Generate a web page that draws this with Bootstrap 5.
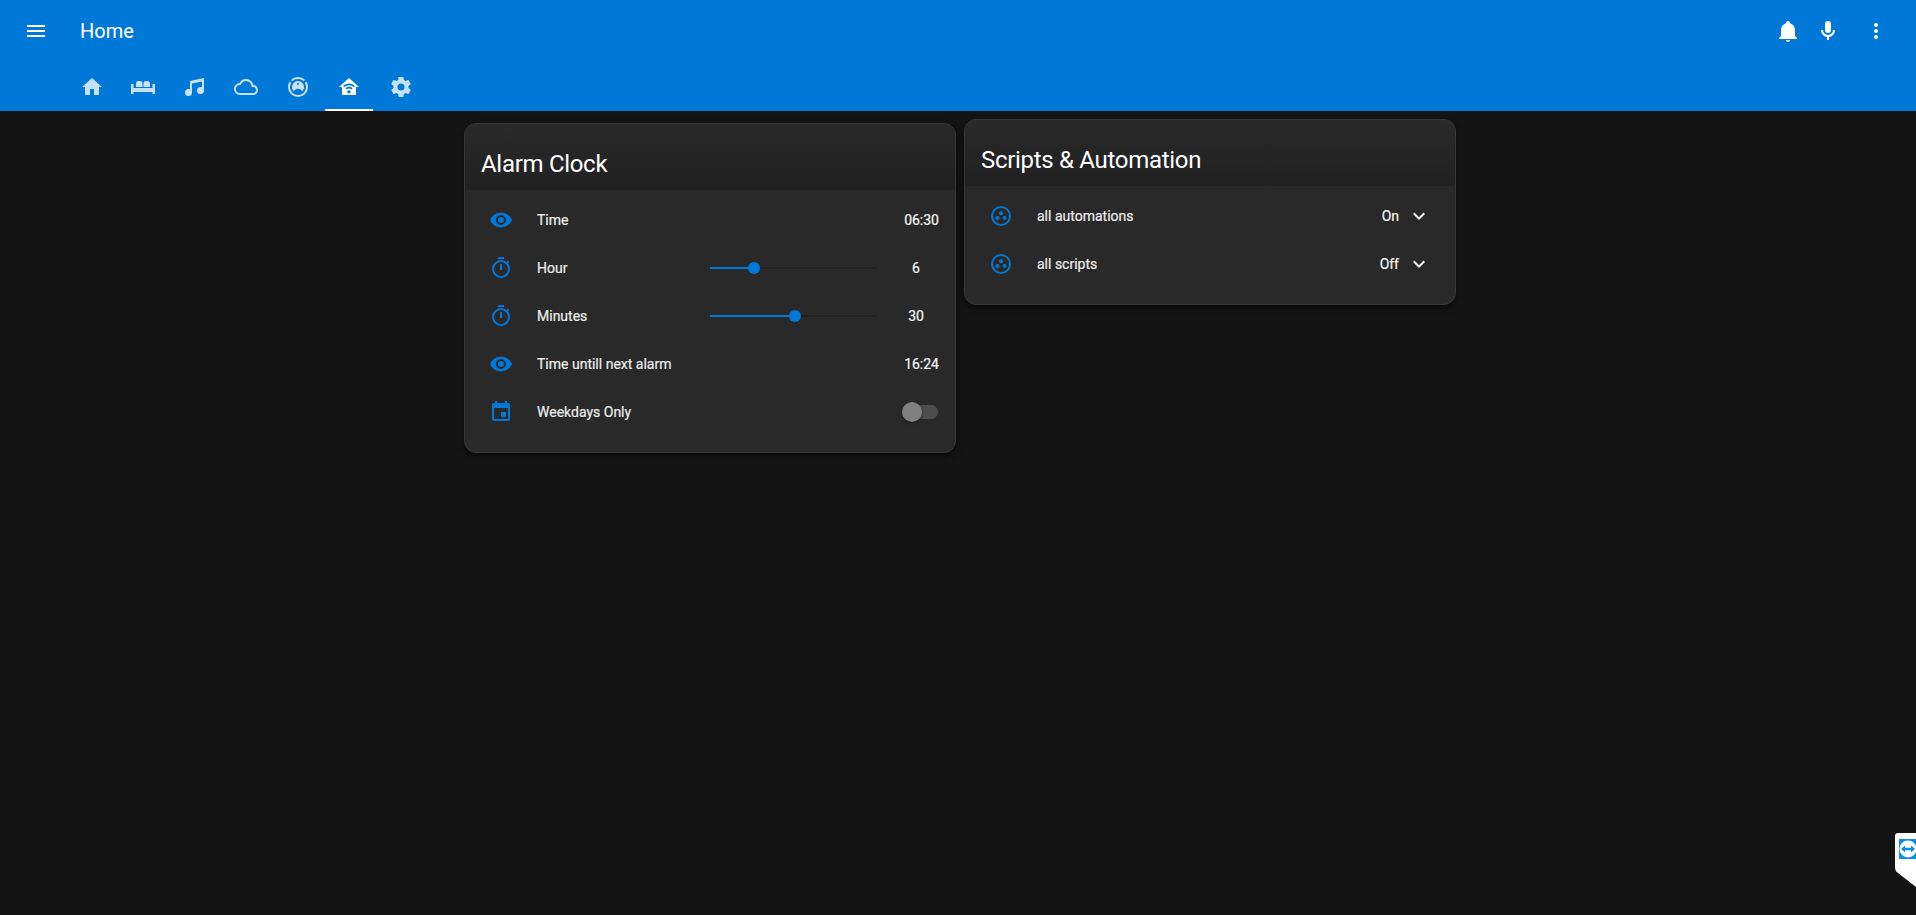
<!DOCTYPE html>
<html lang="en">
<head>
  <meta charset="UTF-8">
  <meta name="viewport" content="width=device-width, initial-scale=1">
  <title>Home</title>
  <link href="https://cdn.jsdelivr.net/npm/bootstrap@5.3.0/dist/css/bootstrap.min.css" rel="stylesheet">
  <style>
    html, body { height: 100%; }
    body {
      background-color: #141414;
      color: #e1e1e1;
      font-family: Roboto, "Liberation Sans", sans-serif;
      font-size: 14px;
      overflow: hidden;
    }
    svg { fill: currentColor; display: block; }
    /* header */
    .app-header { background-color: #0078d7; color: #fff; height: 111px; }
    .top-row { height: 62px; padding-left: 24px; padding-right: 16px; }
    .app-title { font-size: 20px; margin-left: 32px; line-height: 1; }
    .head-btn { width: 40px; height: 40px; }
    .head-btn.dots { width: 48px; margin-left: 4px; }
    .tab-row { height: 49px; padding-left: 68px; gap: 3.45px; }
    .tab-item { width: 48px; height: 49px; color: rgba(255,255,255,.78); border-bottom: 2px solid transparent; padding-top: 3px; }
    .tab-item.current { color: #fff; border-bottom-color: #fff; }
    /* cards */
    .board { padding-left: 4px; gap: 8px; }
    .ha-card {
      width: 492px;
      background-color: #292929;
      border: 1px solid #383838;
      border-radius: 12px;
      box-shadow: 0 3px 6px rgba(0,0,0,.6);
      color: #ededed;
      overflow: hidden;
    }
    .ha-card.first { margin-top: 12px; }
    .ha-card.second { margin-top: 8px; }
    .ha-card .card-header {
      height: 66px;
      padding: 24px 16px 0;
      font-size: 24px;
      line-height: 32px;
      letter-spacing: -.3px;
      color: #fff;
      background: linear-gradient(#292929, #212121);
      border: 0;
      border-radius: 0;
    }
    .ha-card .card-body { padding: 6px 16px 16px; }
    .ent-row { height: 48px; -webkit-text-stroke: .2px; }
    .ent-icon { width: 40px; color: #0078d7; flex-shrink: 0; }
    .ent-name { margin-left: 16px; }
    .ent-val { color: #f5f5f5; }
    .val-center { width: 46px; text-align: center; color: #f5f5f5; }
    .slide-track { width: 168px; height: 2px; background-color: #1f1f1f; margin-right: 15px; }
    .slide-fill { height: 2px; background-color: #0078d7; }
    .slide-knob { width: 12px; height: 12px; border-radius: 50%; background-color: #0078d7; margin-left: -6px; flex-shrink: 0; }
    .toggle-wrap { width: 37px; height: 20px; }
    .toggle-track { position: absolute; right: 1px; top: 3px; width: 32px; height: 14px; border-radius: 7px; background-color: #4d4d4d; }
    .toggle-knob { position: absolute; left: 0; top: 0; width: 20px; height: 20px; border-radius: 50%; background-color: #808080; box-shadow: 0 1px 3px rgba(0,0,0,.5); }
    .select-btn { width: 40px; color: #f5f5f5; }
    /* remote support tab in the corner */
    .remote-tab { position: fixed; right: 0; top: 833px; width: 21px; height: 54px; }
  </style>
</head>
<body>

<header class="app-header">
  <div class="top-row d-flex align-items-center">
    <svg width="24" height="24" viewBox="0 0 24 24"><path d="M3,6H21V8H3V6M3,11H21V13H3V11M3,16H21V18H3V16Z"/></svg>
    <div class="app-title flex-grow-1">Home</div>
    <div class="head-btn d-flex align-items-center justify-content-center">
      <svg width="24" height="24" viewBox="0 0 24 24"><path d="M21,19V20H3V19L5,17V11C5,7.9 7.03,5.17 10,4.29C10,4.19 10,4.1 10,4A2,2 0 0,1 12,2A2,2 0 0,1 14,4C14,4.1 14,4.19 14,4.29C16.97,5.17 19,7.9 19,11V17L21,19M14,21A2,2 0 0,1 12,23A2,2 0 0,1 10,21"/></svg>
    </div>
    <div class="head-btn d-flex align-items-center justify-content-center">
      <svg width="24" height="24" viewBox="0 0 24 24"><path d="M12,2A3,3 0 0,1 15,5V11A3,3 0 0,1 12,14A3,3 0 0,1 9,11V5A3,3 0 0,1 12,2M19,11C19,14.53 16.39,17.44 13,17.93V21H11V17.93C7.61,17.44 5,14.53 5,11H7A5,5 0 0,0 12,16A5,5 0 0,0 17,11H19Z"/></svg>
    </div>
    <div class="head-btn dots d-flex align-items-center justify-content-center">
      <svg width="24" height="24" viewBox="0 0 24 24"><path d="M12,16A2,2 0 0,1 14,18A2,2 0 0,1 12,20A2,2 0 0,1 10,18A2,2 0 0,1 12,16M12,10A2,2 0 0,1 14,12A2,2 0 0,1 12,14A2,2 0 0,1 10,12A2,2 0 0,1 12,10M12,4A2,2 0 0,1 14,6A2,2 0 0,1 12,8A2,2 0 0,1 10,6A2,2 0 0,1 12,4Z"/></svg>
    </div>
  </div>
  <nav class="tab-row d-flex">
    <div class="tab-item d-flex align-items-center justify-content-center">
      <svg width="24" height="24" viewBox="0 0 24 24"><path d="M10,20V14H14V20H19V12H22L12,3L2,12H5V20H10Z"/></svg>
    </div>
    <div class="tab-item d-flex align-items-center justify-content-center">
      <svg width="24" height="24" viewBox="0 0 24 24"><path d="M0,9H2.5V13H21.5V9H24V19H21.5V17H2.5V19H0Z"/><path d="M5,12V8.5A2.5,2.5 0 0,1 7.5,6H9A2.5,2.5 0 0,1 11.5,8.5V12Z"/><path d="M12.5,12V8.5A2.5,2.5 0 0,1 15,6H16.5A2.5,2.5 0 0,1 19,8.5V12Z"/></svg>
    </div>
    <div class="tab-item d-flex align-items-center justify-content-center">
      <svg width="24" height="24" viewBox="0 0 24 24"><path d="M21,3V15.5A3.5,3.5 0 0,1 17.5,19A3.5,3.5 0 0,1 14,15.5A3.5,3.5 0 0,1 17.5,12C18.04,12 18.55,12.12 19,12.34V6.47L9,8.6V17.5A3.5,3.5 0 0,1 5.5,21A3.5,3.5 0 0,1 2,17.5A3.5,3.5 0 0,1 5.5,14C6.04,14 6.55,14.12 7,14.34V6L21,3Z"/></svg>
    </div>
    <div class="tab-item d-flex align-items-center justify-content-center">
      <svg width="24" height="24" viewBox="0 0 24 24"><path d="M19,18H6A4,4 0 0,1 2,14A4,4 0 0,1 6,10H6.71C7.37,7.69 9.5,6 12,6A5.5,5.5 0 0,1 17.5,11.5V12H19A3,3 0 0,1 22,15A3,3 0 0,1 19,18M19.35,10.03C18.67,6.59 15.64,4 12,4C9.11,4 6.6,5.64 5.35,8.03C2.34,8.36 0,10.9 0,14A6,6 0 0,0 6,20H19A5,5 0 0,0 24,15C24,12.36 21.95,10.22 19.35,10.03Z"/></svg>
    </div>
    <div class="tab-item d-flex align-items-center justify-content-center">
      <svg width="24" height="24" viewBox="0 0 24 24"><path d="M12,2C14.65,2 17.19,3.06 19.07,4.93L17.65,6.35C16.15,4.85 14.12,4 12,4C9.88,4 7.84,4.84 6.35,6.35L4.93,4.93C6.81,3.06 9.35,2 12,2M3.66,6.5L5.11,7.94C4.39,9.17 4,10.57 4,12A8,8 0 0,0 12,20A8,8 0 0,0 20,12C20,10.57 19.61,9.17 18.88,7.94L20.34,6.5C21.42,8.12 22,10.04 22,12A10,10 0 0,1 12,22A10,10 0 0,1 2,12C2,10.04 2.58,8.12 3.66,6.5M12,6A6,6 0 0,1 18,12C18,13.59 17.37,15.12 16.24,16.24L14.83,14.83C14.08,14.08 13.06,13.66 12,13.66C10.94,13.66 9.92,14.08 9.17,14.83L7.76,16.24C6.63,15.12 6,13.59 6,12A6,6 0 0,1 12,6M12,8A1,1 0 0,0 11,9A1,1 0 0,0 12,10A1,1 0 0,0 13,9A1,1 0 0,0 12,8Z"/></svg>
    </div>
    <div class="tab-item current d-flex align-items-center justify-content-center">
      <svg width="24" height="24" viewBox="0 0 24 24"><path d="M12,3L2,12H5V20H19V12H22L12,3M12,8.5C14.34,8.5 16.46,9.43 18,10.94L16.8,12.12C15.58,10.91 13.88,10.17 12,10.17C10.12,10.17 8.42,10.91 7.2,12.12L6,10.94C7.54,9.43 9.66,8.5 12,8.5M12,11.83C13.4,11.83 14.67,12.39 15.6,13.3L14.4,14.47C13.79,13.87 12.94,13.5 12,13.5C11.06,13.5 10.21,13.87 9.6,14.47L8.4,13.3C9.33,12.39 10.6,11.83 12,11.83M12,15.17C12.94,15.17 13.7,15.91 13.7,16.83C13.7,17.75 12.94,18.5 12,18.5C11.06,18.5 10.3,17.75 10.3,16.83C10.3,15.91 11.06,15.17 12,15.17Z"/></svg>
    </div>
    <div class="tab-item d-flex align-items-center justify-content-center">
      <svg width="24" height="24" viewBox="0 0 24 24"><path d="M12,15.5A3.5,3.5 0 0,1 8.5,12A3.5,3.5 0 0,1 12,8.5A3.5,3.5 0 0,1 15.5,12A3.5,3.5 0 0,1 12,15.5M19.43,12.97C19.47,12.65 19.5,12.33 19.5,12C19.5,11.67 19.47,11.34 19.43,11L21.54,9.37C21.73,9.22 21.78,8.95 21.66,8.73L19.66,5.27C19.54,5.05 19.27,4.96 19.05,5.05L16.56,6.05C16.04,5.66 15.5,5.32 14.87,5.07L14.5,2.42C14.46,2.18 14.25,2 14,2H10C9.75,2 9.54,2.18 9.5,2.42L9.13,5.07C8.5,5.32 7.96,5.66 7.44,6.05L4.95,5.05C4.73,4.96 4.46,5.05 4.34,5.27L2.34,8.73C2.21,8.95 2.27,9.22 2.46,9.37L4.57,11C4.53,11.34 4.5,11.67 4.5,12C4.5,12.33 4.53,12.65 4.57,12.97L2.46,14.63C2.27,14.78 2.21,15.05 2.34,15.27L4.34,18.73C4.46,18.95 4.73,19.03 4.95,18.95L7.44,17.94C7.96,18.34 8.5,18.68 9.13,18.93L9.5,21.58C9.54,21.82 9.75,22 10,22H14C14.25,22 14.46,21.82 14.5,21.58L14.87,18.93C15.5,18.67 16.04,18.34 16.56,17.94L19.05,18.95C19.27,19.03 19.54,18.95 19.66,18.73L21.66,15.27C21.78,15.05 21.73,14.78 21.54,14.63L19.43,12.97Z"/></svg>
    </div>
  </nav>
</header>

<main class="board d-flex justify-content-center align-items-start">

  <div class="card ha-card first">
    <div class="card-header">Alarm Clock</div>
    <div class="card-body">
      <div class="ent-row d-flex align-items-center">
        <div class="ent-icon d-flex justify-content-center">
          <svg width="24" height="24" viewBox="0 0 24 24"><path d="M12,9A3,3 0 0,0 9,12A3,3 0 0,0 12,15A3,3 0 0,0 15,12A3,3 0 0,0 12,9M12,17A5,5 0 0,1 7,12A5,5 0 0,1 12,7A5,5 0 0,1 17,12A5,5 0 0,1 12,17M12,4.5C7,4.5 2.73,7.61 1,12C2.73,16.39 7,19.5 12,19.5C17,19.5 21.27,16.39 23,12C21.27,7.61 17,4.5 12,4.5Z"/></svg>
        </div>
        <div class="ent-name flex-grow-1">Time</div>
        <div class="ent-val">06:30</div>
      </div>
      <div class="ent-row d-flex align-items-center">
        <div class="ent-icon d-flex justify-content-center">
          <svg width="24" height="24" viewBox="0 0 24 24"><path d="M12,20A7,7 0 0,1 5,13A7,7 0 0,1 12,6A7,7 0 0,1 19,13A7,7 0 0,1 12,20M19.03,7.39L20.45,5.97C20,5.46 19.55,5 19.04,4.56L17.62,6C16.07,4.74 14.12,4 12,4A9,9 0 0,0 3,13A9,9 0 0,0 12,22C17,22 21,17.97 21,13C21,10.88 20.26,8.93 19.03,7.39M11,14H13V8H11M15,1H9V3H15V1Z"/></svg>
        </div>
        <div class="ent-name flex-grow-1">Hour</div>
        <div class="slide-track d-flex align-items-center">
          <div class="slide-fill" style="width: 44px"></div>
          <div class="slide-knob"></div>
        </div>
        <div class="val-center">6</div>
      </div>
      <div class="ent-row d-flex align-items-center">
        <div class="ent-icon d-flex justify-content-center">
          <svg width="24" height="24" viewBox="0 0 24 24"><path d="M12,20A7,7 0 0,1 5,13A7,7 0 0,1 12,6A7,7 0 0,1 19,13A7,7 0 0,1 12,20M19.03,7.39L20.45,5.97C20,5.46 19.55,5 19.04,4.56L17.62,6C16.07,4.74 14.12,4 12,4A9,9 0 0,0 3,13A9,9 0 0,0 12,22C17,22 21,17.97 21,13C21,10.88 20.26,8.93 19.03,7.39M11,14H13V8H11M15,1H9V3H15V1Z"/></svg>
        </div>
        <div class="ent-name flex-grow-1">Minutes</div>
        <div class="slide-track d-flex align-items-center">
          <div class="slide-fill" style="width: 85px"></div>
          <div class="slide-knob"></div>
        </div>
        <div class="val-center">30</div>
      </div>
      <div class="ent-row d-flex align-items-center">
        <div class="ent-icon d-flex justify-content-center">
          <svg width="24" height="24" viewBox="0 0 24 24"><path d="M12,9A3,3 0 0,0 9,12A3,3 0 0,0 12,15A3,3 0 0,0 15,12A3,3 0 0,0 12,9M12,17A5,5 0 0,1 7,12A5,5 0 0,1 12,7A5,5 0 0,1 17,12A5,5 0 0,1 12,17M12,4.5C7,4.5 2.73,7.61 1,12C2.73,16.39 7,19.5 12,19.5C17,19.5 21.27,16.39 23,12C21.27,7.61 17,4.5 12,4.5Z"/></svg>
        </div>
        <div class="ent-name flex-grow-1">Time untill next alarm</div>
        <div class="ent-val">16:24</div>
      </div>
      <div class="ent-row d-flex align-items-center">
        <div class="ent-icon d-flex justify-content-center">
          <svg width="24" height="24" viewBox="0 0 24 24"><path d="M19,19H5V8H19M16,1V3H8V1H6V3H5C3.89,3 3,3.89 3,5V19A2,2 0 0,0 5,21H19A2,2 0 0,0 21,19V5C21,3.89 20.1,3 19,3H18V1M17,12H12V17H17V12Z"/></svg>
        </div>
        <div class="ent-name flex-grow-1">Weekdays Only</div>
        <div class="toggle-wrap position-relative">
          <div class="toggle-track"></div>
          <div class="toggle-knob"></div>
        </div>
      </div>
    </div>
  </div>

  <div class="card ha-card second">
    <div class="card-header">Scripts &amp; Automation</div>
    <div class="card-body">
      <div class="ent-row d-flex align-items-center">
        <div class="ent-icon d-flex justify-content-center">
          <svg width="24" height="24" viewBox="0 0 24 24"><path fill-rule="evenodd" d="M12,2A10,10 0 1,0 12,22A10,10 0 1,0 12,2M12,4A8,8 0 1,1 12,20A8,8 0 1,1 12,4Z"/><circle cx="12" cy="9.3" r="2"/><circle cx="8.5" cy="14" r="2"/><circle cx="15.5" cy="14" r="2"/></svg>
        </div>
        <div class="ent-name flex-grow-1">all automations</div>
        <div class="ent-val">On</div>
        <div class="select-btn d-flex justify-content-center">
          <svg width="24" height="24" viewBox="0 0 24 24"><path d="M7.41,8.58L12,13.17L16.59,8.58L18,10L12,16L6,10L7.41,8.58Z"/></svg>
        </div>
      </div>
      <div class="ent-row d-flex align-items-center">
        <div class="ent-icon d-flex justify-content-center">
          <svg width="24" height="24" viewBox="0 0 24 24"><path fill-rule="evenodd" d="M12,2A10,10 0 1,0 12,22A10,10 0 1,0 12,2M12,4A8,8 0 1,1 12,20A8,8 0 1,1 12,4Z"/><circle cx="12" cy="9.3" r="2"/><circle cx="8.5" cy="14" r="2"/><circle cx="15.5" cy="14" r="2"/></svg>
        </div>
        <div class="ent-name flex-grow-1">all scripts</div>
        <div class="ent-val">Off</div>
        <div class="select-btn d-flex justify-content-center">
          <svg width="24" height="24" viewBox="0 0 24 24"><path d="M7.41,8.58L12,13.17L16.59,8.58L18,10L12,16L6,10L7.41,8.58Z"/></svg>
        </div>
      </div>
    </div>
  </div>

</main>

<svg class="remote-tab" viewBox="0 0 21 54">
  <path fill="#fff" d="M3,0H21V54L3,40Q0,38 0,35V3Q0,0 3,0Z"/>
  <rect x="4" y="6" width="17" height="20" fill="#0e8ee9"/>
  <circle cx="13" cy="16" r="8.5" fill="#fff"/>
  <path fill="#0e8ee9" d="M6,16L10,12.5V14.8H16V12.5L20,16L16,19.5V17.2H10V19.5Z"/>
</svg>

<script src="https://cdn.jsdelivr.net/npm/bootstrap@5.3.0/dist/js/bootstrap.bundle.min.js"></script>
</body>
</html>
